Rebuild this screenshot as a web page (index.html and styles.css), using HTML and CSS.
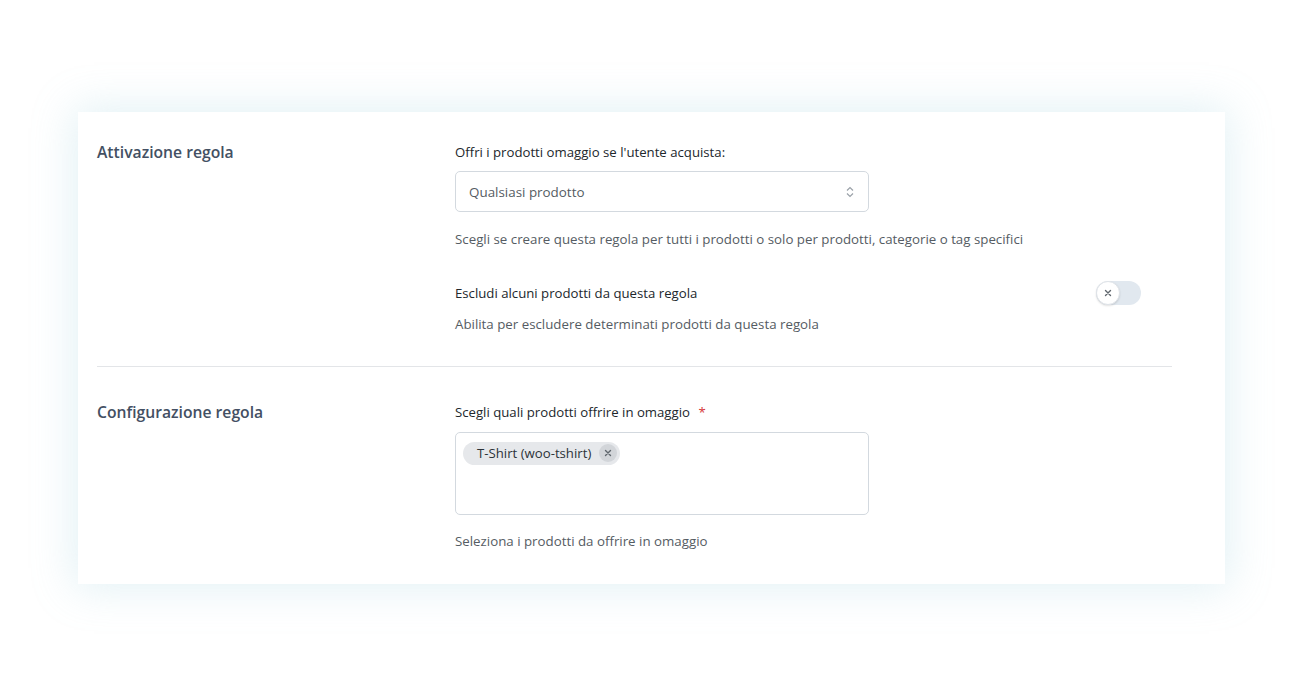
FILE: index.html
```html
<!DOCTYPE html>
<html lang="it">
<head>
    <meta charset="UTF-8">
    <title>Regola omaggio</title>
    <link rel="stylesheet" href="styles.css">
</head>
<body>

    <div class="card">

        <!-- Attivazione -->
        <div class="section">
            <h2 class="section-title">Attivazione regola</h2>
            <div class="fields">
                <label class="field-label">Offri i prodotti omaggio se l'utente acquista:</label>
                <div class="select">
                    <span>Qualsiasi prodotto</span>
                    <svg class="chevrons" width="10" height="14" viewBox="0 0 10 14">
                        <path d="M2 5.5 L5 2.5 L8 5.5" />
                        <path d="M2 8.5 L5 11.5 L8 8.5" />
                    </svg>
                </div>
                <p class="help">Scegli se creare questa regola per tutti i prodotti o solo per prodotti, categorie o tag specifici</p>

                <div class="toggle-row">
                    <span class="field-label">Escludi alcuni prodotti da questa regola</span>
                    <span class="toggle">
                        <span class="knob">
                            <svg width="8" height="8" viewBox="0 0 8 8">
                                <path d="M1.5 1.5 L6.5 6.5 M6.5 1.5 L1.5 6.5" />
                            </svg>
                        </span>
                    </span>
                </div>
                <p class="help help-tight">Abilita per escludere determinati prodotti da questa regola</p>
            </div>
        </div>

        <!-- Configurazione -->
        <div class="section section-last">
            <h2 class="section-title">Configurazione regola</h2>
            <div class="fields">
                <label class="field-label">Scegli quali prodotti offrire in omaggio <span class="required">*</span></label>
                <div class="multi">
                    <span class="chip">
                        T-Shirt (woo-tshirt)
                        <span class="chip-x">
                            <svg width="8" height="8" viewBox="0 0 8 8">
                                <path d="M1.5 1.5 L6.5 6.5 M6.5 1.5 L1.5 6.5" />
                            </svg>
                        </span>
                    </span>
                </div>
                <p class="help help-wide">Seleziona i prodotti da offrire in omaggio</p>
            </div>
        </div>

    </div>

</body>
</html>
```

FILE: styles.css
```css
:root {
    --title: #435063;
    --label: #22272c;
    --muted: #555c63;
    --border: #d3d9df;
    --divider: #e3e5e8;
}

* {
    margin: 0;
    padding: 0;
    box-sizing: border-box;
}

body {
    font-family: 'Open Sans', 'Noto Sans', sans-serif;
    background: #fff;
    width: 1300px;
    height: 693px;
    overflow: hidden;
}

.card {
    width: 1147px;
    margin: 112px 0 0 78px;
    background: #fff;
    box-shadow: 0 0 40px 4px rgba(150, 205, 220, 0.28);
    padding: 0 53px 0 19px;
}

.section {
    display: grid;
    grid-template-columns: 358px 1fr;
    padding: 30px 0 32px;
    border-bottom: 1px solid var(--divider);
}

.section-last {
    border-bottom: none;
    padding: 35px 0 33px;
}

.section-title {
    font-size: 15.7px;
    font-weight: 600;
    line-height: 20px;
    color: var(--title);
}

.field-label {
    display: block;
    font-size: 13.2px;
    line-height: 20px;
    color: var(--label);
}

.required {
    color: #d63638;
    margin-left: 5px;
}

.select {
    width: 414px;
    height: 41px;
    margin-top: 9px;
    border: 1px solid var(--border);
    border-radius: 5px;
    display: flex;
    align-items: center;
    justify-content: space-between;
    padding: 0 13px 0 13px;
    font-size: 13.4px;
    color: var(--muted);
}

.chevrons path {
    fill: none;
    stroke: #9aa1a8;
    stroke-width: 1.2;
}

.help {
    font-size: 13.3px;
    line-height: 20px;
    color: var(--muted);
    margin-top: 17px;
}

.help-tight {
    margin-top: 9px;
}

.help-wide {
    margin-top: 16px;
}

.toggle-row {
    width: 686px;
    margin-top: 32px;
    display: flex;
    align-items: center;
    justify-content: space-between;
}

.toggle {
    width: 45px;
    height: 24px;
    border-radius: 12px;
    background: #e1e8ef;
    display: flex;
    align-items: center;
}

.knob {
    width: 24px;
    height: 24px;
    border-radius: 50%;
    background: #fff;
    border: 1px solid #dfe3e8;
    box-shadow: 0 1px 2px rgba(0, 0, 0, 0.12);
    display: flex;
    align-items: center;
    justify-content: center;
}

.knob path,
.chip-x path {
    fill: none;
    stroke: #5f666d;
    stroke-width: 1.4;
    stroke-linecap: round;
}

.multi {
    width: 414px;
    height: 83px;
    margin-top: 10px;
    border: 1px solid var(--border);
    border-radius: 5px;
    padding: 8px 7px;
}

.chip {
    display: inline-flex;
    align-items: center;
    gap: 8px;
    height: 23px;
    padding: 0 3px 0 14px;
    border-radius: 12px;
    background: #e6e8eb;
    font-size: 13.2px;
    color: #2c3338;
}

.chip-x {
    width: 18px;
    height: 18px;
    border-radius: 50%;
    background: #d2d5d9;
    display: flex;
    align-items: center;
    justify-content: center;
}
```
